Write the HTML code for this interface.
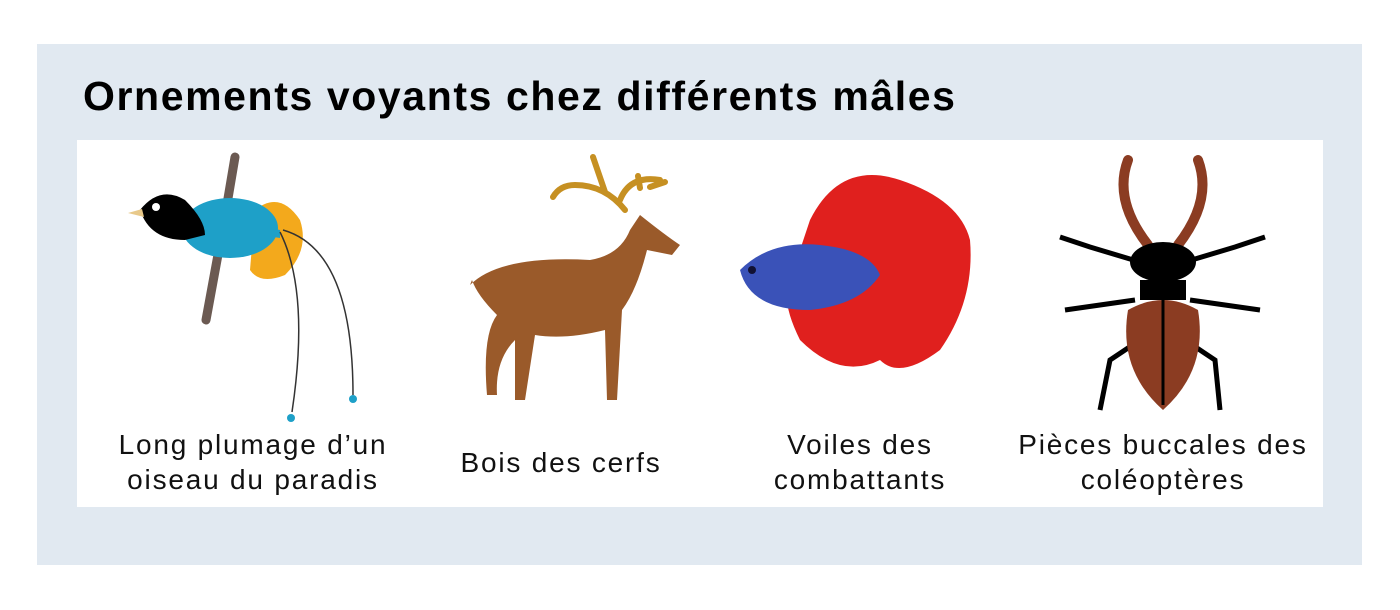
<!DOCTYPE html>
<html><head><meta charset="utf-8"><style>
body{margin:0;width:1400px;height:610px;background:#fff;position:relative;overflow:hidden;font-family:"Liberation Sans",sans-serif}
.panel{position:absolute;left:37px;top:44px;width:1325px;height:521px;background:#e1e9f1}
h1{position:absolute;left:83px;top:73px;margin:0;font-size:41px;font-weight:bold;color:#000;letter-spacing:1.6px;white-space:nowrap}
.box{position:absolute;left:77px;top:140px;width:1246px;height:367px;background:#fff}
.lbl{position:absolute;font-size:28px;line-height:35px;text-align:center;color:#111;width:340px;letter-spacing:1.8px;white-space:nowrap}
svg{position:absolute;left:0;top:0}
</style></head><body>
<div class="panel"></div>
<h1>Ornements voyants chez différents mâles</h1>
<div class="box"></div>
<svg width="1400" height="610">
<!-- bird -->
<path d="M235 157 L224 222 L206 320" stroke="#6b5a52" stroke-width="9" stroke-linecap="round" fill="none"/>
<path d="M255 210 q25-20 45 10 q10 30 -15 55 q-25 10-35-5z" fill="#f3a91c"/>
<ellipse cx="230" cy="228" rx="48" ry="30" fill="#1ea0c8"/>
<path d="M140 210 q20-25 45-10 q20 20 20 35 l-20 5 q-35 0-45-30z" fill="#000"/>
<circle cx="156" cy="207" r="4" fill="#fff"/>
<path d="M128 213 l14-4 l2 8z" fill="#e8c98a"/>
<path d="M255 225 l25 5 l0 8 l-25-4z" fill="#1ea0c8"/>
<path d="M280 232 q30 60 12 180 M283 230 q70 20 70 165" stroke="#333" stroke-width="1.5" fill="none"/>
<circle cx="291" cy="418" r="4" fill="#1ea0c8"/><circle cx="353" cy="399" r="4" fill="#1ea0c8"/>
<!-- deer -->
<path d="M625 210 q-20-25 -50-25 q-15 0-22 12 M605 192 l-12-35 M620 200 q10-25 40-20 M640 188 l-2-12 M650 187 l15-5" stroke="#c69022" stroke-width="6" fill="none" stroke-linecap="round"/>
<path d="M470 285 q30-30 120-25 q30-5 40-30 l10-15 q25 20 40 30 l-8 10 -25-5 q-10 40-25 60 l-5 90 -10 0 -2-70 q-40 10-70 5 l-10 65 -10 0 0-60 q-20 20-18 55 l-10 0 q-5-60 10-80 q-20 -20-25-35 z" fill="#9a5a2a"/>
<!-- fish -->
<path d="M810 220 q30-60 90-40 q60 20 70 60 q5 60 -30 110 q-40 30-60 10 q-40 20-80-20 q-20-40-10-60z" fill="#e0201e"/>
<path d="M740 270 q30-30 80-25 q50 5 60 30 q-20 30-70 35 q-60 0-70-40z" fill="#3a52b8"/>
<circle cx="752" cy="270" r="4" fill="#113"/>
<!-- beetle -->
<path d="M1128 160 q-15 40 20 85 M1198 160 q15 40-20 85" stroke="#8b3c22" stroke-width="10" fill="none" stroke-linecap="round"/>
<g stroke="#000" stroke-width="5" fill="none">
<path d="M1140 262 l-50-15 -30-10 M1185 262 l50-15 30-10 M1135 300 l-70 10 M1190 300 l70 10 M1140 340 l-30 20 -10 50 M1185 340 l30 20 5 50"/>
</g>
<ellipse cx="1163" cy="262" rx="33" ry="20" fill="#000"/>
<rect x="1140" y="280" width="46" height="20" fill="#000"/>
<path d="M1128 310 q35-20 70 0 q10 60 -35 100 q-45-40-35-100z" fill="#8b3c22"/>
<path d="M1163 300 v105" stroke="#000" stroke-width="3"/>
</svg>
<div class="lbl" style="left:83px;top:427px">Long plumage d’un<br>oiseau du paradis</div>
<div class="lbl" style="left:391px;top:445px">Bois des cerfs</div>
<div class="lbl" style="left:690px;top:427px">Voiles des<br>combattants</div>
<div class="lbl" style="left:993px;top:427px">Pièces buccales des<br>coléoptères</div>
</body></html>
